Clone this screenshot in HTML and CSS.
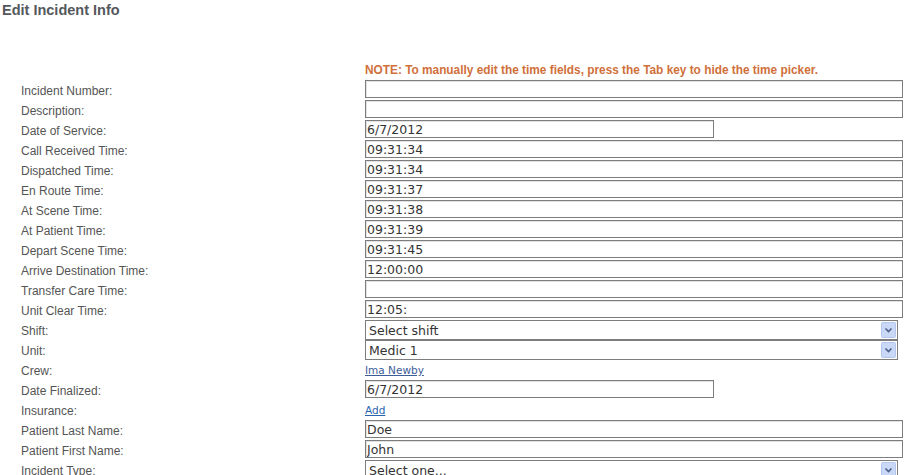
FILE: index.html
```html
<!DOCTYPE html>
<html lang="en">
<head>
    <meta charset="UTF-8">
    <title>Edit Incident Info</title>
    <link rel="stylesheet" href="styles.css">
</head>
<body>
    <h2 class="title">Edit Incident Info</h2>
    <div class="form">
        <div></div>
        <div class="note">NOTE: To manually edit the time fields, press the Tab key to hide the time picker.</div>

        <label>Incident Number:</label>
        <div><input type="text" class="fld"></div>
        <label>Description:</label>
        <div><input type="text" class="fld"></div>
        <label>Date of Service:</label>
        <div><input type="text" class="fld short" value="6/7/2012"></div>
        <label>Call Received Time:</label>
        <div><input type="text" class="fld" value="09:31:34"></div>
        <label>Dispatched Time:</label>
        <div><input type="text" class="fld" value="09:31:34"></div>
        <label>En Route Time:</label>
        <div><input type="text" class="fld" value="09:31:37"></div>
        <label>At Scene Time:</label>
        <div><input type="text" class="fld" value="09:31:38"></div>
        <label>At Patient Time:</label>
        <div><input type="text" class="fld" value="09:31:39"></div>
        <label>Depart Scene Time:</label>
        <div><input type="text" class="fld" value="09:31:45"></div>
        <label>Arrive Destination Time:</label>
        <div><input type="text" class="fld" value="12:00:00"></div>
        <label>Transfer Care Time:</label>
        <div><input type="text" class="fld"></div>
        <label>Unit Clear Time:</label>
        <div><input type="text" class="fld" value="12:05:"></div>
        <label>Shift:</label>
        <div class="sel">
            <select><option>Select shift</option></select>
            <svg class="arrow" width="15" height="16" viewBox="0 0 15 16"><rect x="0.5" y="0.5" width="14" height="15" rx="1" fill="#c9d8f6" stroke="#b3c6ee"/><path d="M4.5 6.5 L7.5 9.5 L10.5 6.5" fill="none" stroke="#4a5f88" stroke-width="1.6"/></svg>
        </div>
        <label>Unit:</label>
        <div class="sel">
            <select><option>Medic 1</option></select>
            <svg class="arrow" width="15" height="16" viewBox="0 0 15 16"><rect x="0.5" y="0.5" width="14" height="15" rx="1" fill="#c9d8f6" stroke="#b3c6ee"/><path d="M4.5 6.5 L7.5 9.5 L10.5 6.5" fill="none" stroke="#4a5f88" stroke-width="1.6"/></svg>
        </div>
        <label>Crew:</label>
        <div><a href="#" class="lnk crew">Ima Newby</a></div>
        <label>Date Finalized:</label>
        <div><input type="text" class="fld short" value="6/7/2012"></div>
        <label>Insurance:</label>
        <div><a href="#" class="lnk">Add</a></div>
        <label>Patient Last Name:</label>
        <div><input type="text" class="fld" value="Doe"></div>
        <label>Patient First Name:</label>
        <div><input type="text" class="fld" value="John"></div>
        <label>Incident Type:</label>
        <div class="sel">
            <select><option>Select one...</option></select>
            <svg class="arrow" width="15" height="16" viewBox="0 0 15 16"><rect x="0.5" y="0.5" width="14" height="15" rx="1" fill="#c9d8f6" stroke="#b3c6ee"/><path d="M4.5 6.5 L7.5 9.5 L10.5 6.5" fill="none" stroke="#4a5f88" stroke-width="1.6"/></svg>
        </div>
    </div>
</body>
</html>
```

FILE: styles.css
```css
html, body {
    margin: 0;
    padding: 0;
    background: #fff;
    overflow: hidden;
}

body {
    font-family: "Liberation Sans", Arial, sans-serif;
    font-size: 12px;
    color: #555;
}

.title {
    margin: 0;
    padding: 2px 0 0 2px;
    font-size: 14.5px;
    line-height: 16px;
    color: #54585c;
}

.form {
    display: grid;
    grid-template-columns: 344px 538px;
    grid-auto-rows: 20px;
    padding: 42px 0 0 21px;
}

.form label {
    padding-top: 1px;
    line-height: 20px;
    color: #555;
}

.note {
    font-weight: bold;
    font-size: 11.85px;
    color: #d0703a;
    line-height: 20px;
}

.fld {
    display: block;
    box-sizing: border-box;
    width: 538px;
    height: 18px;
    margin: 0;
    padding: 0 1px;
    border: 1px solid #7d7d7d;
    box-shadow: inset 1px 1px 0 #e2e2e2;
    font-family: "DejaVu Sans", Verdana, sans-serif;
    font-size: 12.5px;
    color: #333;
    outline: none;
}
.short { width: 349px; }

.sel {
    position: relative;
    width: 533px;
}
.sel select {
    display: block;
    box-sizing: border-box;
    width: 533px;
    height: 20px;
    margin: 0;
    padding: 0 3px;
    border: 1px solid #7d7d7d;
    background: #fff;
    appearance: none;
    -webkit-appearance: none;
    font-family: "DejaVu Sans", Verdana, sans-serif;
    font-size: 12.5px;
    color: #333;
}
.arrow {
    position: absolute;
    top: 2px;
    right: 2px;
}

.lnk {
    display: inline-block;
    font-family: "DejaVu Sans", Verdana, sans-serif;
    font-size: 10.5px;
    line-height: 20px;
    color: #2a64b0;
    text-decoration: underline;
}
.crew { color: #3d5d98; }
```
